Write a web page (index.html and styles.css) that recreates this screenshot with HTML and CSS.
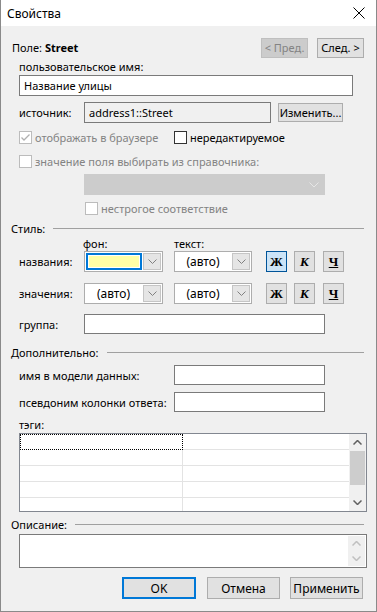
FILE: index.html
```html
<!DOCTYPE html>
<html lang="ru">
<head>
  <meta charset="UTF-8">
  <title>Свойства</title>
  <link rel="stylesheet" href="styles.css">
</head>
<body>
  <div class="dialog">
    <div class="titlebar">
      <span class="title">Свойства</span>
      <svg class="close" width="12" height="12" viewBox="0 0 12 12"><path d="M0.5 0.5 L11.5 11.5 M11.5 0.5 L0.5 11.5" stroke="#000" stroke-width="1" fill="none"/></svg>
    </div>

    <div class="content">
      <div class="row field-row">
        <div class="field-name">Поле: <strong>Street</strong></div>
        <div class="nav">
          <button class="btn small disabled">&lt; Пред.</button>
          <button class="btn small">След. &gt;</button>
        </div>
      </div>

      <div class="indent">
        <div class="label-line">пользовательское имя:</div>
        <div class="input wide">Название улицы</div>

        <div class="row source-row">
          <div class="lbl">источник:</div>
          <div class="input readonly source">address1::Street</div>
          <button class="btn change">Изменить...</button>
        </div>

        <div class="row check-row first">
          <div class="row cb-item wide-item">
            <span class="cb disabled checked">
              <svg width="11" height="11" viewBox="0 0 11 11"><path d="M1.5 5.5 L4 8 L9.5 2.5" stroke="#b0b0b0" stroke-width="1.3" fill="none"/></svg>
            </span>
            <span class="cb-text muted">отображать в браузере</span>
          </div>
          <div class="row cb-item">
            <span class="cb"></span>
            <span class="cb-text">нередактируемое</span>
          </div>
        </div>

        <div class="row check-row second">
          <span class="cb disabled"></span>
          <span class="cb-text muted">значение поля выбирать из справочника:</span>
        </div>

        <div class="select-disabled">
          <svg width="10" height="6" viewBox="0 0 10 6"><path d="M0.5 0.5 L5 5 L9.5 0.5" stroke="#e6e6e6" fill="none"/></svg>
        </div>

        <div class="row check-row third">
          <span class="cb disabled"></span>
          <span class="cb-text muted">нестрогое соответствие</span>
        </div>
      </div>

      <div class="group-head style-head"><span>Стиль:</span><i></i></div>

      <div class="indent">
        <div class="row col-heads">
          <span class="head-bg">фон:</span>
          <span class="head-text">текст:</span>
        </div>

        <div class="row style-row first">
          <div class="lbl">названия:</div>
          <div class="combo">
            <div class="combo-val focus"><span class="swatch"></span></div>
            <div class="combo-arrow"><svg width="9" height="5" viewBox="0 0 9 5"><path d="M0.5 0.5 L4.5 4.5 L8.5 0.5" stroke="#808080" fill="none"/></svg></div>
          </div>
          <div class="combo second">
            <div class="combo-val">(авто)</div>
            <div class="combo-arrow"><svg width="9" height="5" viewBox="0 0 9 5"><path d="M0.5 0.5 L4.5 4.5 L8.5 0.5" stroke="#808080" fill="none"/></svg></div>
          </div>
          <div class="fmt">
            <button class="fbtn on b">Ж</button>
            <button class="fbtn i">К</button>
            <button class="fbtn u">Ч</button>
          </div>
        </div>

        <div class="row style-row second">
          <div class="lbl">значения:</div>
          <div class="combo">
            <div class="combo-val">(авто)</div>
            <div class="combo-arrow"><svg width="9" height="5" viewBox="0 0 9 5"><path d="M0.5 0.5 L4.5 4.5 L8.5 0.5" stroke="#808080" fill="none"/></svg></div>
          </div>
          <div class="combo second">
            <div class="combo-val">(авто)</div>
            <div class="combo-arrow"><svg width="9" height="5" viewBox="0 0 9 5"><path d="M0.5 0.5 L4.5 4.5 L8.5 0.5" stroke="#808080" fill="none"/></svg></div>
          </div>
          <div class="fmt">
            <button class="fbtn b">Ж</button>
            <button class="fbtn i">К</button>
            <button class="fbtn u">Ч</button>
          </div>
        </div>

        <div class="row group-row">
          <div class="lbl">группа:</div>
          <div class="input mid"></div>
        </div>
      </div>

      <div class="group-head extra-head"><span>Дополнительно:</span><i></i></div>

      <div class="indent">
        <div class="row extra-row first">
          <div class="lbl long">имя в модели данных:</div>
          <div class="input short"></div>
        </div>
        <div class="row extra-row second">
          <div class="lbl long">псевдоним колонки ответа:</div>
          <div class="input short"></div>
        </div>

        <div class="label-line tags-label">тэги:</div>
        <div class="tags">
          <div class="grid">
            <div class="cell c1 focus-cell"></div><div class="cell"></div>
            <div class="cell c1"></div><div class="cell"></div>
            <div class="cell c1"></div><div class="cell"></div>
            <div class="cell c1"></div><div class="cell"></div>
            <div class="cell c1"></div><div class="cell"></div>
          </div>
          <div class="scroll">
            <div class="sarrow"><svg width="9" height="5" viewBox="0 0 9 5"><path d="M0.5 4.5 L4.5 0.5 L8.5 4.5" stroke="#606060" stroke-width="1.5" fill="none"/></svg></div>
            <div class="thumb"></div>
            <div class="sfill"></div>
            <div class="sarrow"><svg width="9" height="5" viewBox="0 0 9 5"><path d="M0.5 0.5 L4.5 4.5 L8.5 0.5" stroke="#606060" stroke-width="1.5" fill="none"/></svg></div>
          </div>
        </div>
      </div>

      <div class="group-head desc-head"><span>Описание:</span><i></i></div>

      <div class="indent">
        <div class="textarea">
          <div class="text-area-body"></div>
          <div class="scroll light">
            <div class="sarrow"><svg width="9" height="5" viewBox="0 0 9 5"><path d="M0.5 4.5 L4.5 0.5 L8.5 4.5" stroke="#c0c0c0" stroke-width="1.5" fill="none"/></svg></div>
            <div class="sarrow"><svg width="9" height="5" viewBox="0 0 9 5"><path d="M0.5 0.5 L4.5 4.5 L8.5 0.5" stroke="#c0c0c0" stroke-width="1.5" fill="none"/></svg></div>
          </div>
        </div>
      </div>

      <div class="row footer">
        <button class="btn big default">OK</button>
        <button class="btn big">Отмена</button>
        <button class="btn big">Применить</button>
      </div>
    </div>
  </div>
</body>
</html>
```

FILE: styles.css
```css
* {
  box-sizing: border-box;
}
body {
  margin: 0;
  font-family: "Noto Sans", "Open Sans", sans-serif;
  font-size: 11px;
  color: #000;
  background: #f0f0f0;
  white-space: nowrap;
}
.dialog {
  width: 377px;
  height: 612px;
  background: #f0f0f0;
  border: 1px solid #8a8a8a;
  border-top: none;
  overflow: hidden;
}
.titlebar {
  height: 26px;
  background: #fff;
  display: flex;
  align-items: center;
  padding-left: 7px;
  margin: 0 -1px;
}
.title {
  flex: 1;
  font-size: 12px;
}
.close {
  margin-right: 12px;
}
.content {
  padding: 0 12px 0 10px;
}
.row {
  display: flex;
  align-items: center;
}
.indent {
  padding-left: 8px;
}
button {
  font-family: inherit;
  font-size: 11px;
  color: #000;
  padding: 0;
  margin: 0;
}
.btn {
  background: #e1e1e1;
  border: 1px solid #adadad;
  height: 21px;
}
.btn.disabled {
  background: #cccccc;
  border-color: #bfbfbf;
  color: #838383;
}

/* Поле */
.field-row {
  margin-top: 11px;
  height: 21px;
}
.field-name {
  flex: 1;
  padding-left: 1px;
}
.field-name strong {
  font-weight: bold;
}
.nav {
  display: flex;
  gap: 9px;
}
.btn.small {
  width: 47px;
  height: 20px;
}

.label-line {
  height: 16px;
  line-height: 16px;
  margin-top: 1px;
}
.input {
  background: #fff;
  border: 1px solid #7a7a7a;
  height: 21px;
  line-height: 19px;
  padding-left: 4px;
}
.input.wide {
  width: 334px;
}
.input.readonly {
  background: #f0f0f0;
}
.lbl {
  width: 65px;
  flex: none;
}
.lbl.long {
  width: 155px;
}
.source-row {
  margin-top: 6px;
}
.input.source {
  width: 187px;
}
.btn.change {
  width: 65px;
  height: 19px;
  margin-left: 7px;
}

/* чекбоксы */
.check-row {
  height: 13px;
}
.check-row.first {
  margin-top: 8px;
}
.check-row.second {
  margin-top: 11px;
}
.check-row.third {
  margin-top: 7px;
  padding-left: 66px;
}
.cb-item.wide-item {
  width: 155px;
}
.cb {
  width: 13px;
  height: 13px;
  border: 1px solid #333;
  background: #fff;
  flex: none;
  display: flex;
  align-items: center;
  justify-content: center;
}
.cb.disabled {
  border-color: #bcbcbc;
}
.cb-text {
  margin-left: 3px;
}
.muted {
  color: #838383;
}
.select-disabled {
  margin: 6px 0 0 65px;
  width: 241px;
  height: 21px;
  background: #cccccc;
  display: flex;
  align-items: center;
  justify-content: flex-end;
  padding-right: 6px;
}

/* заголовки групп */
.group-head {
  display: flex;
  align-items: center;
  height: 14px;
}
.group-head i {
  flex: 1;
  height: 1px;
  background: #a0a0a0;
  margin-left: 8px;
}
.style-head {
  margin-top: 6px;
}
.extra-head {
  margin-top: 11px;
}
.desc-head {
  margin-top: 5px;
}

/* стиль */
.col-heads {
  height: 14px;
  margin-top: 1px;
}
.head-bg {
  margin-left: 64px;
  width: 91px;
}
.style-row {
  height: 21px;
}
.style-row.first {
  margin-top: 1px;
}
.style-row.second {
  margin-top: 11px;
}
.combo {
  width: 79px;
  height: 21px;
  border: 1px solid #adadad;
  background: #fff;
  display: flex;
  padding: 1px;
  flex: none;
}
.combo.second {
  width: 78px;
  margin-left: 11px;
}
.combo-val {
  flex: 1;
  display: flex;
  align-items: center;
  justify-content: center;
  padding-right: 2px;
  font-size: 12px;
}
.combo-val.focus {
  border: 2px solid #0078d7;
  padding: 1px;
  margin-right: 1px;
}
.swatch {
  display: block;
  width: 100%;
  height: 100%;
  background: #ffffa6;
}
.combo-arrow {
  width: 18px;
  background: #e5e5e5;
  border: 1px solid #c5c5c5;
  display: flex;
  align-items: center;
  justify-content: center;
}
.fmt {
  display: flex;
  gap: 7px;
  margin-left: 14px;
}
.fbtn {
  width: 21px;
  height: 21px;
  background: #e1e1e1;
  border: 1px solid #adadad;
  font-family: "Liberation Serif", serif;
  font-weight: bold;
  font-size: 13px;
  line-height: 19px;
}
.fbtn.on {
  background: #cce4f7;
  border-color: #005499;
}
.fbtn.i {
  font-style: italic;
}
.fbtn.u {
  text-decoration: underline;
}
.fmt .fbtn + .fbtn + .fbtn {
  margin-left: 1px;
}
.group-row {
  margin-top: 10px;
}
.input.mid {
  width: 241px;
  height: 20px;
}

/* дополнительно */
.extra-row.first {
  margin-top: 6px;
}
.extra-row.second {
  margin-top: 7px;
}
.input.short {
  width: 151px;
  height: 20px;
}
.tags-label {
  height: 14px;
  line-height: 14px;
  margin-top: 6px;
}
.tags {
  margin-top: 1px;
  width: 348px;
  height: 79px;
  border: 1px solid #828790;
  background: #fff;
  display: flex;
}
.grid {
  flex: 1;
  display: grid;
  grid-template-columns: 163px 1fr;
  grid-auto-rows: 16px;
  overflow: hidden;
}
.cell {
  border-bottom: 1px solid #e3e3e3;
}
.cell.c1 {
  border-right: 1px solid #e3e3e3;
}
.cell.focus-cell {
  border: 1px dotted #000;
}
.scroll {
  width: 17px;
  background: #f0f0f0;
  display: flex;
  flex-direction: column;
}
.sarrow {
  height: 17px;
  display: flex;
  align-items: center;
  justify-content: center;
  flex: none;
}
.thumb {
  height: 34px;
  background: #cdcdcd;
  margin: 0 1px;
}
.sfill {
  flex: 1;
}

/* описание */
.textarea {
  margin-top: 3px;
  width: 348px;
  height: 34px;
  border: 1px solid #7a7a7a;
  background: #fff;
  display: flex;
}
.text-area-body {
  flex: 1;
}
.scroll.light {
  margin: 1px 1px 1px 0;
  justify-content: space-between;
}
.scroll.light .sarrow {
  height: 15px;
}

/* кнопки */
.footer {
  margin-top: 9px;
  justify-content: flex-end;
  gap: 10px;
  padding-right: 1px;
}
.btn.big {
  width: 73px;
  height: 22px;
  font-size: 12px;
}
.btn.default {
  width: 74px;
  border: 2px solid #0078d7;
  margin-right: 1px;
}
```
